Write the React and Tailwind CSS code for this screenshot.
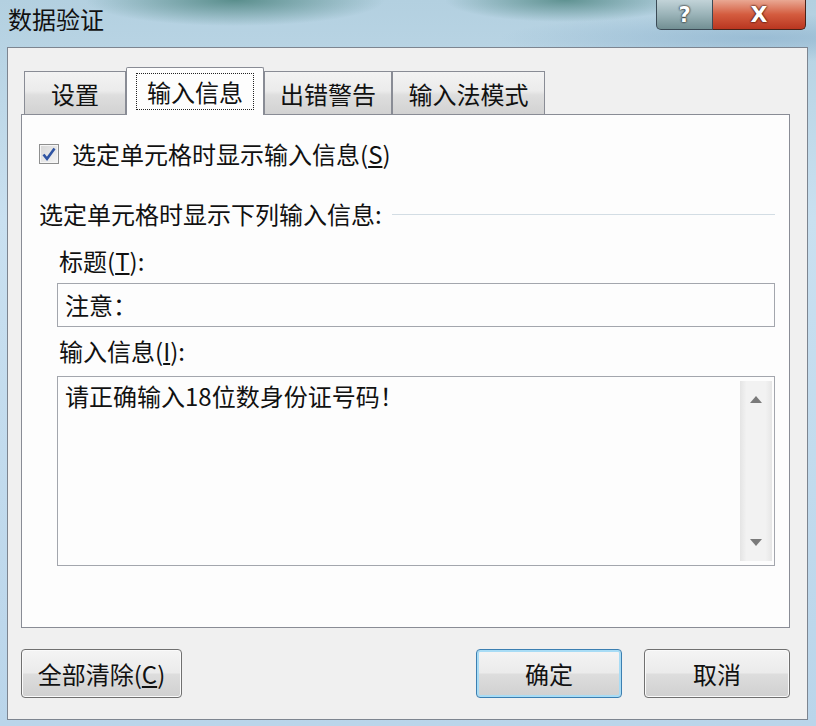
import React from "react";

const font = { fontFamily: '"Noto Sans CJK SC", "Noto Sans", sans-serif' };

const tabs = [
  { label: "设置", w: "w-[102px] ml-[3px]" },
  { label: "输入信息", w: "w-[138px]", active: true },
  { label: "出错警告", w: "w-[128px]" },
  { label: "输入法模式", w: "w-[153px]" },
];

const Btn = ({ children, focus, className = "" }) => (
  <button
    className={
      "h-[49px] rounded-[4px] border text-[24px] text-[#111] " +
      "bg-[linear-gradient(180deg,#f4f4f4_0%,#ebebeb_48%,#dddddd_52%,#d0d0d0_100%)] " +
      (focus
        ? "border-[#3c7fb1] shadow-[inset_0_0_0_2px_#a8dcf5] "
        : "border-[#707070] shadow-[inset_0_0_0_1px_#fafafa] ") +
      className
    }
  >
    {children}
  </button>
);

const Tab = ({ label, w, active }) =>
  active ? (
    <div
      className={`${w} relative z-10 -mb-px flex h-[48px] items-center justify-center rounded-t-[2px] border border-b-0 border-[#898c95] bg-[#fdfdfd]`}
    >
      <span className="border border-dotted border-[#222] px-[10px] leading-[35px]">
        {label}
      </span>
    </div>
  ) : (
    <div
      className={`${w} flex h-[43px] items-center justify-center border border-b-0 border-[#898c95] bg-[linear-gradient(180deg,#f3f3f3_0%,#ebebeb_45%,#dedede_55%,#d2d2d2_100%)] pt-[2px]`}
    >
      {label}
    </div>
  );

export default function App() {
  return (
    <div
      style={font}
      className="flex h-[726px] w-[816px] flex-col overflow-hidden bg-[radial-gradient(ellipse_150px_26px_at_235px_0px,rgba(60,120,112,0.75)_0%,rgba(60,120,112,0)_100%),radial-gradient(ellipse_120px_22px_at_565px_0px,rgba(60,120,112,0.7)_0%,rgba(60,120,112,0)_100%),radial-gradient(ellipse_260px_24px_at_760px_38px,rgba(130,170,200,0.55)_0%,rgba(130,170,200,0)_100%),linear-gradient(180deg,#b3d0e0_0%,#c9e0f0_30%,#bad5ea_100%)] text-[#111]"
    >
      {/* title bar */}
      <div className="flex h-[47px] shrink-0 items-start justify-between">
        <div className="pl-[8px] pt-[1px] text-[24px] leading-[36px] text-[#111]">
          数据验证
        </div>
        <div className="mr-[10px] flex">
          <div
            style={{ fontFamily: '"DejaVu Sans", sans-serif' }}
            className="flex h-[30px] w-[57px] items-center justify-center rounded-bl-[5px] border border-t-0 border-[#3b4a55] bg-[linear-gradient(180deg,#c2d3d8_0%,#9ab3b8_50%,#728f93_100%)] text-[21px] font-bold leading-[26px] text-white [text-shadow:0_0_2px_#222,0_0_2px_#222]"
          >
            ?
          </div>
          <div
            style={{ fontFamily: '"DejaVu Sans", sans-serif' }}
            className="flex h-[30px] w-[93px] items-center justify-center rounded-br-[5px] border border-l-0 border-t-0 border-[#4a2218] bg-[linear-gradient(180deg,#e9a893_0%,#d45c3f_50%,#b93620_100%)] text-[22px] font-bold leading-[26px] text-white [text-shadow:0_0_2px_#3a1008,0_0_2px_#3a1008]"
          >
            X
          </div>
        </div>
      </div>

      {/* dialog body */}
      <div className="ml-[7px] mr-[8px] flex h-[673px] shrink-0 flex-col border border-[#7d8590] bg-[#f0f0f0] pl-[13px] pr-[17px] pt-[18px] text-[24px]">
        <div className="flex h-[48px] items-end">
          {tabs.map((t) => (
            <Tab key={t.label} {...t} />
          ))}
        </div>

        <div className="flex h-[514px] flex-col border border-[#898c95] bg-[#fdfdfd] pl-[17px] pr-[14px] pt-[24px]">
          <div className="flex h-[30px] items-center">
            <span className="flex h-[20px] w-[20px] items-center justify-center border border-[#8e8f8f] bg-[#f6f6f6]">
              <span className="flex h-[16px] w-[16px] items-center justify-center bg-[linear-gradient(135deg,#d8d8d8_0%,#f4f4f4_100%)]">
                <svg width="14" height="14" viewBox="0 0 14 14">
                  <path
                    d="M1.5 7.5 L5 11.8 L12.5 1.5"
                    fill="none"
                    stroke="#2f54a3"
                    strokeWidth="2.6"
                  />
                </svg>
              </span>
            </span>
            <span className="ml-[13px] leading-[30px]">
              选定单元格时显示输入信息(<span className="underline underline-offset-2">S</span>)
            </span>
          </div>

          <div className="mt-[30px] flex h-[30px] items-center">
            <span className="leading-[30px]">选定单元格时显示下列输入信息:</span>
            <span className="ml-[10px] h-px flex-1 bg-[#d3dde4]" />
          </div>

          <div className="mt-[17px] pl-[20px] leading-[30px]">
            标题(<span className="underline underline-offset-2">T</span>):
          </div>
          <div className="ml-[18px] mt-[7px] flex h-[44px] items-center border border-[#a3a6ad] bg-[#fdfdfd] pl-[7px]">
            注意：
          </div>

          <div className="mt-[9px] pl-[20px] leading-[30px]">
            输入信息(<span className="underline underline-offset-2">I</span>):
          </div>
          <div className="ml-[18px] mt-[10px] flex h-[190px] border border-[#a3a6ad] bg-[#fdfdfd] pr-[2px]">
            <div className="flex-1 pl-[7px] pt-[2px] leading-[34px]">
              请正确输入18位数身份证号码！
            </div>
            <div className="my-[4px] flex w-[32px] flex-col items-center justify-between bg-[linear-gradient(90deg,#e4e4e4_0%,#f2f2f2_20%,#f2f2f2_80%,#e6e6e6_100%)] py-[15px]">
              <svg width="12" height="7" viewBox="0 0 12 7">
                <path d="M6 0 L12 7 L0 7 Z" fill="#7a7a7a" />
              </svg>
              <svg width="12" height="7" viewBox="0 0 12 7">
                <path d="M0 0 L12 0 L6 7 Z" fill="#7a7a7a" />
              </svg>
            </div>
          </div>
        </div>

        <div className="mt-[21px] flex items-center">
          <Btn className="w-[161px]">
            全部清除(<span className="underline underline-offset-2">C</span>)
          </Btn>
          <div className="flex-1" />
          <Btn focus className="w-[146px]">
            确定
          </Btn>
          <Btn className="ml-[22px] w-[146px]">取消</Btn>
        </div>
      </div>
    </div>
  );
}
